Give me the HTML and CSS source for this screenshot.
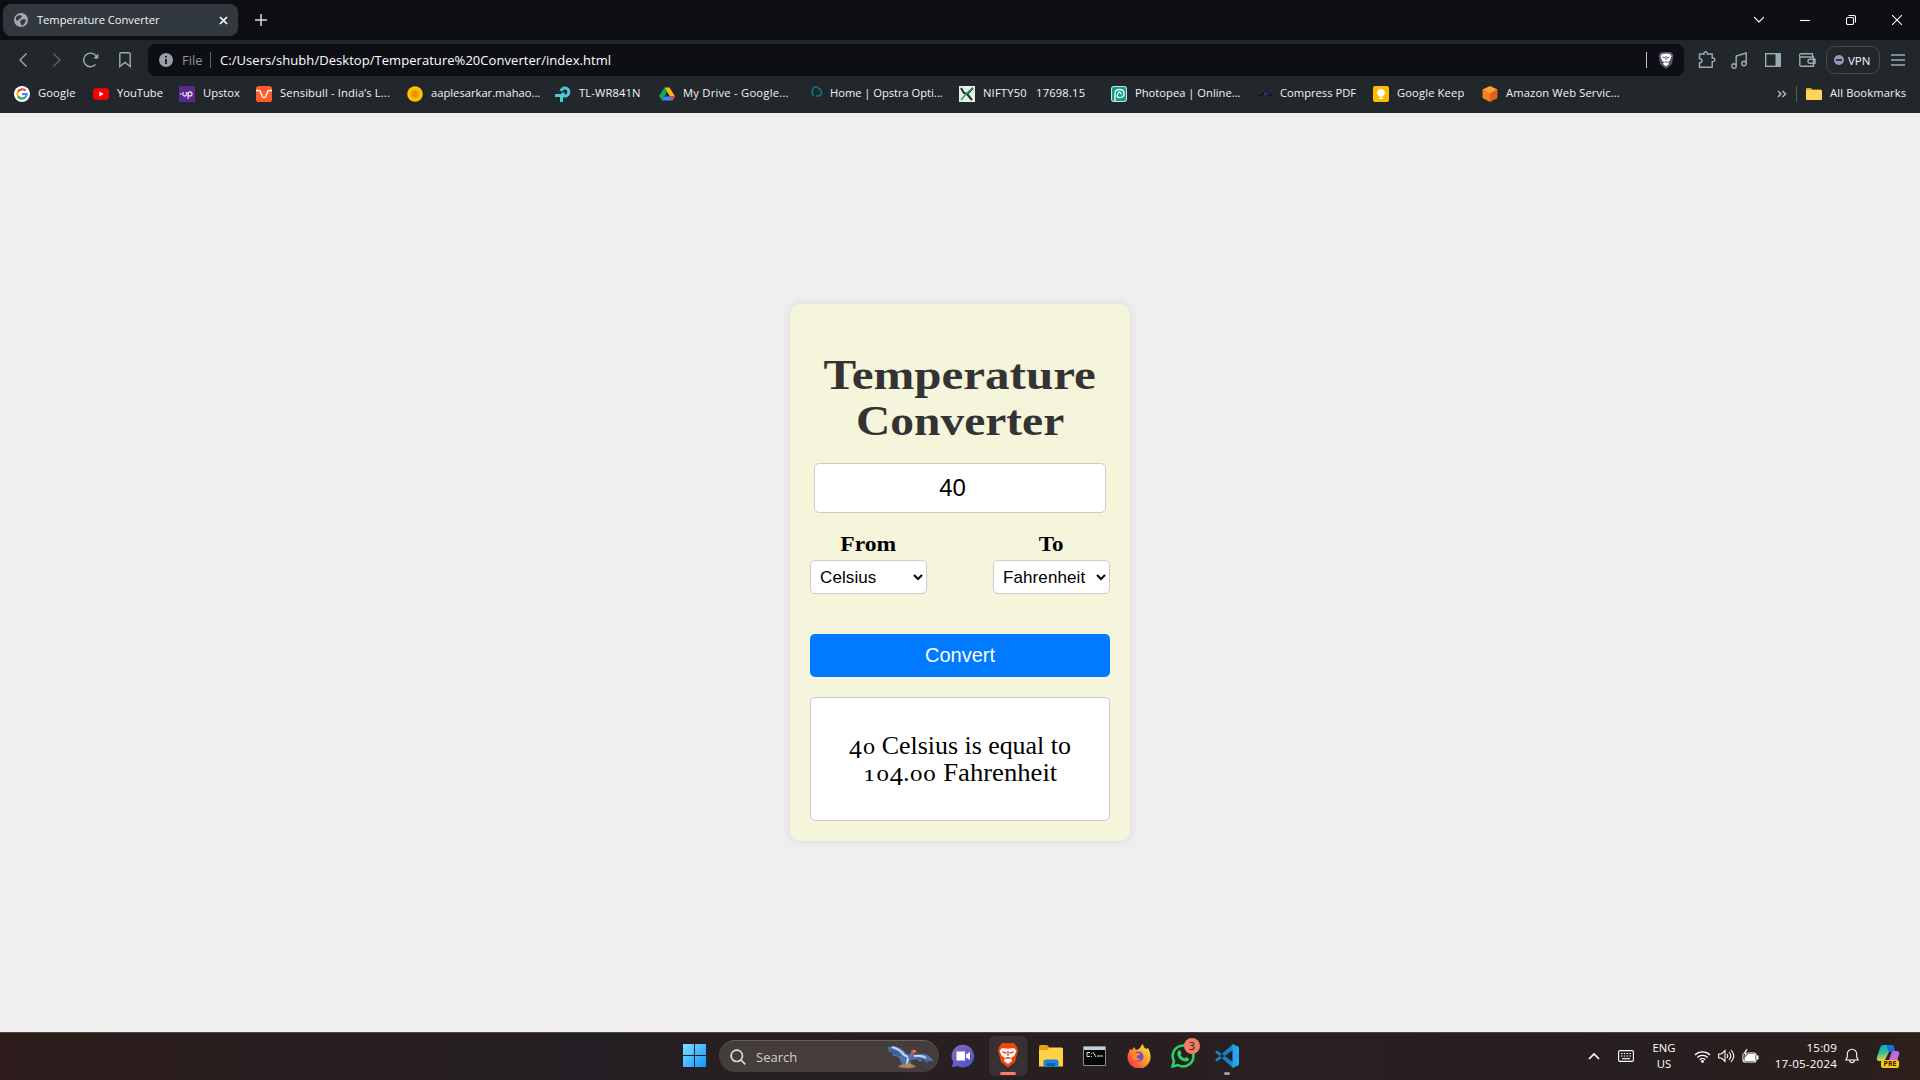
FILE: index.html
```html
<!DOCTYPE html>
<html lang="en">
<head>
<meta charset="utf-8">
<title>Temperature Converter</title>
<link rel="stylesheet" href="styles.css">
</head>
<body>
<header class="browser">
  <div class="tabstrip">
    <div class="tab">
      <svg width="14" height="14" viewBox="0 0 14 14"><circle cx="7" cy="7" r="7" fill="#a2a7b0"/><path d="M2 4l3-2 3 1-1 2-2 1-1 2-2-1zM7 7l3-1 2 1-1 3-3 3-1-2-1-2z" fill="#343a40"/></svg>
      <span class="tab-title">Temperature Converter</span>
      <svg width="9" height="9" viewBox="0 0 9 9" stroke="#fff" stroke-width="1.7"><path d="M1 1l7 7M8 1L1 8"/></svg>
    </div>
    <svg class="plus" width="12" height="12" viewBox="0 0 12 12" stroke="#d8dbe0" stroke-width="1.5"><path d="M6 0v12M0 6h12"/></svg>
    <div class="window-controls">
      <svg width="10" height="10" viewBox="0 0 10 10"><path d="M0 2l5 5 5-5"/></svg>
      <svg width="10" height="10" viewBox="0 0 10 10"><path d="M0 5.5h10"/></svg>
      <svg width="10" height="10" viewBox="0 0 10 10"><rect x=".5" y="2.5" width="7" height="7" rx="1.2"/><path d="M2.5 .5h5a2 2 0 0 1 2 2v5"/></svg>
      <svg width="10" height="10" viewBox="0 0 10 10"><path d="M0 0l10 10M10 0L0 10"/></svg>
    </div>
  </div>
  <div class="toolbar">
    <div class="nav">
      <svg width="8" height="14" viewBox="0 0 8 14"><path d="M7.500 .5L1 7l6.500 6.500"/></svg>
      <svg class="dim" width="8" height="14" viewBox="0 0 8 14"><path d="M.5 .5L7 7l-6.500 6.500"/></svg>
      <svg width="16" height="16" viewBox="0 0 16 16"><path d="M12.500 12.500A6.800 6.800 0 1 1 14 6"/><path d="M15.300 1.500v5h-5z" fill="#9aacb6" stroke="none"/></svg>
      <svg width="12" height="16" viewBox="0 0 12 16"><path d="M.8 14.500V2a1.300 1.300 0 0 1 1.300-1.300h7.800A1.300 1.300 0 0 1 11.200 2v12.500l-5.200-4z"/></svg>
    </div>
    <div class="address">
      <svg width="14" height="14" viewBox="0 0 14 14"><circle cx="7" cy="7" r="7" fill="#9a9da5"/><path d="M7 6v5M7 3v1.600" stroke="#0d0f14" stroke-width="1.700"/></svg>
      <span class="scheme">File</span><i class="rule"></i>
      <span class="url">C:/Users/shubh/Desktop/Temperature%20Converter/index.html</span>
      <i class="rule light"></i>
      <svg class="shield" width="16" height="18" viewBox="0 0 16 18"><path d="M3 1h10l2.500 3-1.500 9-6 5-6-5L.5 4z" fill="#54556b"/><path d="M4 3l4-.5L12 3l1.500 2-1.500 4.500-2 1.500 1 2-3 2.500L5 13l1-2-2-1.500L2.500 5z" fill="#fff"/><path d="M4.500 6l2.500 1M11.500 6L9 7M8 5v4M6.500 11h3" stroke="#54556b"/></svg>
    </div>
    <div class="actions">
      <svg width="18" height="18" viewBox="0 0 18 18"><path d="M1.500 3H6V2.300a1.600 1.600 0 0 1 3.200 0V3h5v4h.8a1.800 1.800 0 0 1 0 3.600h-.8v5.600H1.500v-4.500H2a2 2 0 0 0 0-4h-.5z"/></svg>
      <svg width="17" height="17" viewBox="0 0 17 17"><circle cx="3" cy="14" r="2.200"/><circle cx="13" cy="11.500" r="2.200"/><path d="M5.200 14V4l10-3v10.500"/></svg>
      <svg width="16" height="14" viewBox="0 0 16 14"><rect x=".7" y=".7" width="14.600" height="12.600"/><path d="M10.500 0H16v14h-5.500z" fill="#9aacb6" stroke="none"/></svg>
      <svg width="17" height="14" viewBox="0 0 17 14"><path d="M.8 3V12a1.200 1.200 0 0 0 1.200 1.200h12.500V4H2A1.300 1.300 0 0 1 2 .8h11.500V4M16 6.200h-5a2 2 0 0 0 0 4h5z"/></svg>
      <div class="vpn"><i></i>VPN</div>
      <svg width="14" height="12" viewBox="0 0 14 12"><path d="M0 1h14M0 6h14M0 11h14"/></svg>
    </div>
  </div>
  <nav class="bookmarks">
    <a><svg viewBox="0 0 16 16"><circle cx="8" cy="8" r="8" fill="#fff"/><g fill="none" stroke-width="2.200"><path d="M11.500 4.800A4.600 4.600 0 0 0 4 5.700" stroke="#ea4335"/><path d="M4 5.700a4.600 4.600 0 0 0 0 4.700" stroke="#fbbc05"/><path d="M4 10.400a4.600 4.600 0 0 0 7 1" stroke="#34a853"/><path d="M11 11.400A4.600 4.600 0 0 0 12.600 8H8" stroke="#4285f4"/></g></svg><span class="wide">Google</span></a>
    <a><svg viewBox="0 0 16 16"><rect y="2.300" width="16" height="11.500" rx="3" fill="#f00"/><path d="M6.300 5.500v5l4.400-2.500z" fill="#fff"/></svg><span>YouTube</span></a>
    <a><svg viewBox="0 0 16 16"><path d="M0 0h16v16H0z" fill="#5a298b"/><path d="M1 8h1.500M4 6v2.500q0 1.500 1.500 1.500T7.500 8.500V6M9 13V6.500M9 8q0-2 2-2t2 2-2 2-2-2" fill="none" stroke="#e4d3f3" stroke-width="1.300"/></svg><span>Upstox</span></a>
    <a><svg viewBox="0 0 16 16"><rect width="16" height="16" rx="2.500" fill="#ff5b2b"/><path d="M0 4.500h3q1 0 1.500 1.500L6 10q2 3.500 4 0l1.500-4q.5-1.500 1.500-1.500h3" fill="none" stroke="#fff" stroke-width="1.500"/></svg><span class="wide">Sensibull - India’s L...</span></a>
    <a><svg viewBox="0 0 16 16"><circle cx="8" cy="8" r="7.800" fill="#fdc500"/><circle cx="8" cy="8" r="4.800" fill="#f5a700"/><path d="M8 4.500v7M6 7l2-2 2 2v3H6z" stroke="#dc8d00" fill="none"/></svg><span>aaplesarkar.mahao...</span></a>
    <a><svg viewBox="0 0 16 16"><path d="M0 9.500h8V6.500M6.500 16V9.500M6 5a4 4 0 1 1 4 5H7" fill="none" stroke="#4acbd6" stroke-width="3"/></svg><span class="wide">TL-WR841N</span></a>
    <a><svg viewBox="0 0 16 16"><path d="M5.500 1.500h5L16 10.500h-5z" fill="#fbbc04"/><path d="M5.500 1.500L8 6 3 14.500 0 10z" fill="#0da960"/><path d="M5.500 10.500H16L13.500 14.500H3z" fill="#4285f4"/><path d="M11 10.500h5l-2.500 4z" fill="#ea4335"/></svg><span class="wider">My Drive - Google...</span></a>
    <a><svg viewBox="0 0 16 16" fill="none"><path d="M5.500 10Q2.500 5 5.500 2T12 3.500t-1 6.500H8" stroke="#087a8b" stroke-width="1.500"/><path d="M4 8q-6 3-3 7 5 2 8-3" stroke="#232d46"/></svg><span class="tight">Home | Opstra Opti...</span></a>
    <a><svg viewBox="0 0 16 16"><path d="M0 0h16v16H0z" fill="#e2f3e6"/><path d="M2 2l3 5 3 1 6-6M8 8l5 6" fill="none" stroke="#162f2b" stroke-width="2"/><path d="M2 14l5-6 7-6" stroke="#3b9574" fill="none" stroke-width="1.500"/></svg><span class="ticker">NIFTY50   17698.15</span></a>
    <a><svg viewBox="0 0 16 16"><rect width="16" height="16" rx="3" fill="#d8dedd"/><rect x="1" y="1" width="14" height="14" rx="2" fill="#0a9f89"/><path d="M4 15V8q0-4.500 4.500-4.500T13 7.500 9 11.500 6.500 8.500 8.800 6t1.600 2.500" fill="none" stroke="#fff" stroke-width="1.300"/></svg><span>Photopea | Online...</span></a>
    <a><svg viewBox="0 0 16 16"><path d="M1 9h4M11 9h4M3 10l5-1 2-5M7 5l2 5" stroke="#111724" stroke-width="1.500"/><path d="M6 10l3-6 1 5z" fill="#29406f"/></svg><span class="shift">Compress PDF</span></a>
    <a><svg viewBox="0 0 16 16"><rect width="16" height="16" rx="2" fill="#fb0"/><circle cx="8" cy="6.800" r="3.800" fill="#fff"/><path d="M6 9h4v1.500H6zM6 11.500h4V13H6z" fill="#fff"/></svg><span class="wide">Google Keep</span></a>
    <a><svg viewBox="0 0 16 16"><path d="M8 0l7.500 3.500L8 8 .5 3.500z" fill="#ff9d35"/><path d="M.5 3.500L8 7.500V16L.5 12z" fill="#f58220"/><path d="M15.500 3.500L8 7.500V16l7.500-4z" fill="#e55f1c"/></svg><span class="wide">Amazon Web Servic...</span></a>
    <div class="all">
      <svg class="more" viewBox="0 0 10 8"><path d="M1 1l3 3-3 3M5.500 1l3 3-3 3" fill="none" stroke="#b7c1c8" stroke-width="1.400"/></svg>
      <i></i>
      <svg viewBox="0 0 16 16"><path d="M0 3q0-1 1-1h4l1.500 1.500H15V13H0z" fill="#e7a51c"/><rect y="4" width="16" height="10" rx="1" fill="#ffd45a"/></svg><span class="wide">All Bookmarks</span>
    </div>
  </nav>
</header>

<main class="page">
  <section class="card">
    <h1><span class="h-first">Temperature</span><br><span class="h-second">Converter</span></h1>
    <input class="amount" type="text" value="40">
    <div class="units">
      <div class="unit"><label class="from">From</label><select><option>Celsius</option></select></div>
      <div class="unit"><label class="to">To</label><select><option>Fahrenheit</option></select></div>
    </div>
    <button class="convert">Convert</button>
    <div class="result">
      <p class="r-first"><span class="low">4</span><span class="small">0</span> Celsius is equal to</p>
      <p class="r-second"><span class="small pair">10</span><span class="low">4</span>.<span class="small pair">00</span> Fahrenheit</p>
    </div>
  </section>
</main>

<footer class="taskbar">
  <div class="apps">
    <svg width="24" height="24" viewBox="0 0 24 24"><defs><linearGradient id="win" x2="1" y2="1"><stop stop-color="#84e0fe"/><stop offset="1" stop-color="#0795fb"/></linearGradient></defs><path d="M0 0H11V11H0zM12 0H23V11H12zM0 12H11V23H0zM12 12H23V23H12z" fill="url(#win)"/></svg>
    <div class="search">
      <svg width="16" height="16" viewBox="0 0 16 16" fill="none" stroke="#ddd" stroke-width="1.700"><circle cx="6.800" cy="6.800" r="5.700"/><path d="M11 11l4.300 4.300"/></svg>
      <span>Search</span>
      <svg class="bird" width="46" height="24" viewBox="0 0 46 24"><path d="M12 20l7-2 7 2 2 2-8 1.500L10 22z" fill="#a08255"/><path d="M0 2q10-2 15 3l5 5 5-4 2 4q9-3 14 1l5 5-5 0-2 2-4-3-3 2-3-3-6 1-4 4-5 0-3-6-3-2-3 0-1-4-3 0z" fill="#4d72ae"/><path d="M4 2q8 2 12 8l4 2M26 11q8-1 12 2M20 13l-1 6" fill="none" stroke="#c8d8ed" stroke-width="2"/><path d="M2 5l9 3M5 8l8 3M30 13l11 4" stroke="#304e83"/><path d="M23 7q0-3 3-2l3 3-3 0-2 2z" fill="#db563e"/><path d="M25 6l2-1 1 2z" fill="#ffd452"/><path d="M19 18v4M22 17v5" stroke="#c7a16b"/></svg>
    </div>
    <svg width="24" height="24" viewBox="0 0 24 24"><defs><linearGradient id="chat" x2="1" y2="1"><stop stop-color="#8c6bc2"/><stop offset="1" stop-color="#454fcb"/></linearGradient></defs><path d="M12 .8A11.300 11.300 0 1 1 7 22.300L.8 23l1.500-5A11.300 11.300 0 0 1 12 .8z" fill="url(#chat)"/><path d="M5.500 7.500H14v9H5.500zM15 10.500l4-2.500v8l-4-2.500z" fill="#fff"/></svg>
    <div class="active">
      <svg width="22" height="26" viewBox="0 0 22 26"><path d="M5 1h12l3 4 1 3-3 12-7 5.500L4 20 1 8l1-3z" fill="#f1450f"/><path d="M5 6l6 .8L17 6l2.500 3L17 14l-3 2 1 3-4 3-4-3 1-3-3-2-2.500-5z" fill="#fff"/><path d="M5.500 10l4 1M16.500 10l-4 1M11 9v5M8.500 16.500l2.500-1 2.500 1" fill="none" stroke="#f1450f" stroke-width="1.400"/></svg>
    </div>
    <svg width="24" height="22" viewBox="0 0 24 22"><path d="M0 1.500Q0 0 1.500 0H8l3 3-3 4H0z" fill="#e4a014"/><path d="M0 5h8l3-2.500h11.500Q24 2.500 24 4v17.500H0z" fill="#ffcf48"/><path d="M4.500 21.500V17q0-2.500 2.500-2.500h10q2.500 0 2.500 2.500v4.500z" fill="#1686d9"/><path d="M8 18h8v3.500H8z" fill="#0862ad"/></svg>
    <svg width="23" height="20" viewBox="0 0 23 20"><path d="M.5.5h22v19H.5z" fill="#050505" stroke="#85919b"/><path d="M1 1h21v3H1z" fill="#c7d0d7"/><path d="M7 6.500H4v4h3M8.500 7v1M8.500 10v1M10 6l3 5M14 10h6" stroke="#ddd" fill="none"/></svg>
    <svg width="24" height="24" viewBox="0 0 24 24"><defs><linearGradient id="fox" x1="1" x2="0" y2="1"><stop stop-color="#fff13b"/><stop offset=".5" stop-color="#ff9128"/><stop offset="1" stop-color="#f11862"/></linearGradient></defs><path d="M16 0q0 3 3 5l2-1q2.500 4 2.500 8A11.500 11.500 0 1 1 1 10L3 5l2 1 2-3 2 3q4-1 5-4z" fill="url(#fox)"/><circle cx="11.500" cy="12.500" r="5" fill="#7745cf"/><path d="M5 8l6 1 3 1-4 2q-1 3 4 3-6 4-9-2z" fill="#ff8923"/></svg>
    <div class="whatsapp">
      <svg width="24" height="24" viewBox="0 0 24 24"><path d="M1.500 22.500L3 17A10.400 10.400 0 1 1 7 21z" fill="none" stroke="#28d466" stroke-width="2.500"/><path d="M7.500 6.500h2l1 3-1 1.500q1.500 2.500 4 3.500l1.500-1.500 3 1.500q0 3.500-4 3-7-1.500-8-8z" fill="#28d466"/></svg>
      <b>3</b>
    </div>
    <div class="code">
      <svg width="24" height="24" viewBox="0 0 24 24"><path d="M0 8l2-1.500L18 18v6L1 9zM0 16l2 1.500L18 6V0L1 15z" fill="#1683cb"/><path d="M17.500 0L24 3v18l-6.500 3z" fill="#29a3ef"/></svg>
    </div>
  </div>
  <div class="tray">
    <svg width="12" height="8" viewBox="0 0 12 8"><path d="M1 7l5-5 5 5" stroke-width="1.700"/></svg>
    <svg width="16" height="12" viewBox="0 0 16 12"><rect x=".6" y=".6" width="14.800" height="10.800" rx="1.300"/><path d="M3 3.500h10M3 6h10" stroke-dasharray="1.500 1.300"/><path d="M4 8.700h8"/></svg>
    <div class="lang">ENG<br>US</div>
    <svg width="17" height="13" viewBox="0 0 17 13"><path d="M1 5a10.600 10.600 0 0 1 15 0M3.300 7.500a7.400 7.400 0 0 1 10.400 0M5.700 9.800a4 4 0 0 1 5.600 0" stroke-width="1.300"/><circle cx="8.500" cy="11.500" r="1.400" fill="#fff" stroke="none"/></svg>
    <svg width="17" height="14" viewBox="0 0 17 14"><path d="M.7 5h2.800L7 1.500v11L3.500 9H.7zM9 5q1.500 2 0 4M11 3q3.500 4 0 8M13 1q5.500 6 0 12"/></svg>
    <svg width="17" height="14" viewBox="0 0 17 14"><rect x="1" y="4" width="13" height="9" rx="2"/><path d="M6 5.500h6.500v6H3V9z" fill="#fff"/><path d="M15 7h1v3h-1z" fill="#fff"/><path d="M4 0L1 5h2L1.500 9 6 4H3.800L6 0z" fill="#fff" stroke="#2a2122" stroke-width=".5"/></svg>
    <div class="clock">15:09<br>17-05-2024</div>
    <svg width="14" height="16" viewBox="0 0 14 16"><path d="M.8 12l1.500-3V6a4.700 4.700 0 0 1 9.400 0v3l1.500 3zM4.800 12.500a2.200 2.200 0 0 0 4.400 0"/></svg>
    <div class="copilot">
      <svg width="24" height="22" viewBox="0 0 24 22"><defs><linearGradient id="cpa" y2="1" x2=".3"><stop stop-color="#159be8"/><stop offset=".5" stop-color="#29bda0"/><stop offset="1" stop-color="#f4d33c"/></linearGradient><linearGradient id="cpb" y2="1" x2="0"><stop stop-color="#aa6cf0"/><stop offset="1" stop-color="#fa6598"/></linearGradient></defs><path d="M7 0h8q3 0 3 5h-4l-4 8q-1 3-5 3H3q-3 0-2-4L4 3q1-3 3-3z" fill="url(#cpa)"/><path d="M11 0h5q2 0 3 6l-5 1q-3-1-3-7z" fill="#1670d6"/><path d="M17 6h4q3 0 2 4l-2 6q-1 5-5 5H9q3-2 4-6l2-6q.5-3 2-3z" fill="url(#cpb)"/></svg>
      <b>PRE</b>
    </div>
  </div>
</footer>
</body>
</html>
```
FILE: styles.css
```css
* { box-sizing: border-box; }
body {
  margin: 0; width: 1920px; height: 1080px; overflow: hidden;
  display: flex; flex-direction: column;
  font-family: "Open Sans", sans-serif; color: #f3f4f6;
}
svg { flex: none; display: block; }

.browser { height: 113px; background: #22272b; flex: none; }
.tabstrip { height: 40px; background: #0d0f14; display: flex; align-items: center; padding-left: 3px; }
.tab {
  width: 235px; height: 32px; border-radius: 8px; background: #31393e;
  display: flex; align-items: center; padding: 0 10px 0 11px; gap: 9px;
}
.tab-title { flex: 1; font-size: 11.2px; line-height: 14px; padding-bottom: 1px; letter-spacing: -.04px; white-space: nowrap; }
.plus { margin-left: 17px; }
.window-controls { margin-left: auto; padding-right: 18px; display: flex; gap: 36px; }
.window-controls svg { fill: none; stroke: #fff; stroke-width: 1.1; }

.toolbar { height: 40px; display: flex; align-items: center; }
.nav { width: 148px; padding-left: 19px; display: grid; grid-template-columns: 34px 30px 36px 12px; align-items: center; }
.nav svg, .actions svg { fill: none; stroke: #9aacb6; stroke-width: 1.4; }
.nav .dim { stroke: #59636a; }
.address {
  width: 1536px; height: 32px; border-radius: 8px; background: #0d0f14;
  display: flex; align-items: center; padding: 0 10px 0 11px; white-space: nowrap; font-size: 13px;
}
.scheme { color: #8e939d; margin-left: 9px; width: 28px; }
.rule { width: 1px; height: 16px; background: #60646c; margin-right: 9px; }
.url { flex: 1; color: #fff; letter-spacing: .05px; }
.rule.light { background: #bfc1c6; margin-right: 11px; }
.actions { flex: 1; padding-left: 14px; display: grid; grid-template-columns: 33px 34px 34px 27px 65px 14px; align-items: center; }
.vpn {
  width: 54px; height: 28px; border: 1px solid #414b50; border-radius: 9px;
  display: flex; align-items: center; gap: 4px; padding-left: 7px; font-size: 11.5px;
}
.vpn i { width: 10px; height: 10px; border-radius: 50%; background: linear-gradient(#30364a, #30364a) center / 6px 2px no-repeat #9799b2; }

.bookmarks {
  height: 28px; padding-left: 14px; display: grid; align-items: center; font-size: 11.2px;
  grid-template-columns: 79px 86px 77px 151px 148px 104px 149px 151px 152px 146px 116px 109px 295px 143px;
}
.bookmarks a, .all { display: flex; align-items: center; gap: 8px; white-space: nowrap; }
.bookmarks span { line-height: 14px; padding-bottom: 2px; }
.bookmarks svg { width: 16px; height: 16px; }
.bookmarks .more { width: 10px; height: 8px; }
.bookmarks .ticker { white-space: pre; letter-spacing: .18px; }
.bookmarks .wide { letter-spacing: .13px; }
.bookmarks .wider { letter-spacing: .24px; }
.bookmarks .tight { letter-spacing: -.04px; margin-left: -2px; }
.bookmarks .shift { margin-left: -1px; }
.all i { width: 1px; height: 16px; background: #515c62; margin: 0 1px; }

.page { flex: 1; background: #efefef; display: flex; justify-content: center; align-items: flex-start; padding-top: 191px; }
.card {
  width: 340px; height: 537px; padding: 48px 20px 20px; border-radius: 10px; background: #f5f5dc;
  box-shadow: 0 0 10px rgba(0,0,0,.1); color: #000; text-align: center;
  font-family: "Liberation Serif", serif;
}
.card h1 { margin: 0 -20px 19px; font-size: 42px; line-height: 46px; color: #333; }
.card h1 span { display: inline-block; }
.h-first { transform: scaleX(1.167); }
.h-second { transform: scaleX(1.13); }
.amount {
  display: block; width: 292px; height: 50px; margin: 0 auto; padding: 10px 25px 10px 10px;
  border: 1px solid #ccc; border-radius: 5px; text-align: center; font: 24px "Liberation Sans", sans-serif;
}
.units { display: flex; justify-content: space-between; margin-top: 20px; }
.unit { width: 117px; display: flex; flex-direction: column; align-items: center; }
.unit label { font-weight: bold; font-size: 20.5px; line-height: 23px; height: 27px; }
.from { transform: scaleX(1.15); }
.to { transform: scaleX(1.12); }
.unit select {
  width: 117px; height: 34px; padding: 5px; border: 1px solid #ccc; border-radius: 5px;
  background: #fff; color: #000; font: 17px "Liberation Sans", sans-serif; letter-spacing: .1px;
}
.convert {
  display: block; width: 300px; height: 43px; margin: 40px 0 20px; border: 0; border-radius: 5px;
  background: #007bff; color: #fff; font: 20px "Liberation Sans", sans-serif;
}
.result { height: 124px; border: 1px solid #ccc; border-radius: 5px; background: #fff; padding-top: 34px; }
.result p { margin: 0; font-size: 24.5px; line-height: 27px; height: 27px; white-space: nowrap; }
.r-first { transform: scaleX(1.057); }
.r-second { transform: scaleX(1.088); }
/* Old-style numerals: 4 descends below the baseline, 0 and 1 sit at x-height. */
.low { vertical-align: -4px; line-height: 0; }
.small { display: inline-block; font-family: "DejaVu Serif", serif; font-size: 15.5px; line-height: 15px; margin: 0 1.3px; transform: scaleX(1.25); }
.small.pair { margin: 0 2.5px; }

.taskbar {
  height: 48px; flex: none; border-top: 1px solid #4b4444; display: grid; grid-template-columns: 1fr 354px;
  background: linear-gradient(90deg, #2d1c1b, #241f24 30%, #282020 50%, #281f21 85%, #2c1f1c);
  padding-bottom: 1px;
}
.apps { display: grid; align-items: center; padding-left: 683px; grid-template-columns: 36px 232px 38px 50px 44px 44px 44px 44px 24px; }
.search {
  width: 220px; height: 32px; border-radius: 16px; background: #443d3c; border-top: 1px solid #655f5e;
  display: flex; align-items: center; padding-left: 11px;
}
.search span { width: 137px; padding-left: 10px; font-size: 13px; line-height: 16px; color: #d2cfce; }
.search .bird { margin-left: 5px; }
.active {
  width: 35px; height: 40px; border-radius: 5px; background: #393131; box-shadow: 4px 0 0 -1px #393131, 4px 0 0 #302828;
  display: flex; flex-direction: column; align-items: center; padding-top: 6px; padding-left: 3px;
}
.active::after { content: ""; width: 16px; height: 3px; border-radius: 2px; background: #f47b65; margin-top: 4px; }
.whatsapp, .copilot { position: relative; }
.whatsapp b {
  position: absolute; left: 13px; top: -6px; width: 16px; height: 16px; border-radius: 50%;
  background: #f47b65; color: #221b1b; font-size: 11px; font-weight: 400; line-height: 16px; text-align: center;
}
.code { height: 40px; padding-top: 8px; display: flex; flex-direction: column; align-items: center; }
.code::after { content: ""; width: 6px; height: 3px; border-radius: 2px; background: #a19c9b; margin-top: 4px; }
.tray {
  display: grid; align-items: center; padding-left: 22px; font-size: 11.3px; line-height: 16px; color: #fff;
  grid-template-columns: 30px 31px 45px 24px 24px 24px 71px 8px 31px 24px;
}
.tray > svg { fill: none; stroke: #fff; stroke-width: 1.1; }
.tray > svg:nth-of-type(6) { grid-column: 9; }
.lang { width: 30px; text-align: center; }
.clock { text-align: right; white-space: nowrap; font-size: 11.6px; letter-spacing: .18px; justify-self: end; }
.copilot b {
  position: absolute; left: 5px; top: 15px; width: 18px; height: 8px; border-radius: 2px;
  background: #ffc514; color: #2b2000; font-size: 7px; line-height: 8px; text-align: center;
}
```
